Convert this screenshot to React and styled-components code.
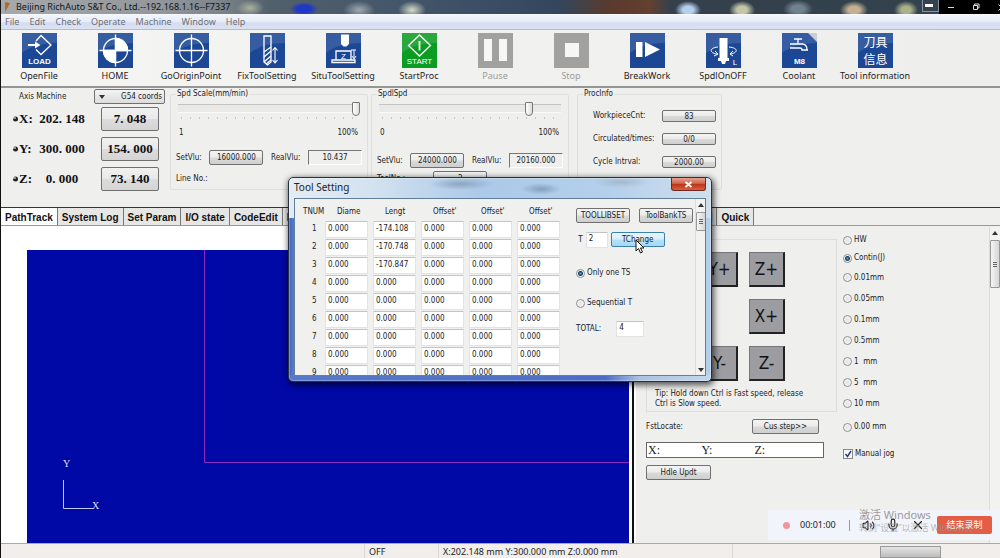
import React from 'react';
import styled, { createGlobalStyle, css } from 'styled-components';
import { Volume2, Mic, X } from 'lucide-react';

const GlobalStyle = createGlobalStyle`
  * {
    box-sizing: border-box;
  }
  body {
    margin: 0;
    background: #efefee;
    color: #222;
    font: 8px/12px 'DejaVu Sans Condensed', 'DejaVu Sans', sans-serif;
  }
  button, input, select {
    font: inherit;
    color: inherit;
    margin: 0;
  }
`;

const Page = styled.div`
  position: relative;
  display: flex;
  flex-direction: column;
  min-height: 100vh;
  overflow: hidden;
  border-left: 1px solid #111;
`;

/* ---------- title bar and menu ---------- */

const TitleBar = styled.header`
  display: flex;
  align-items: center;
  height: 14px;
  padding-left: 4px;
  gap: 6px;
  overflow: hidden;
  font: 9px/14px 'Noto Sans', sans-serif;
  color: #10151c;
  background:
    radial-gradient(ellipse 14px 8px at 249px 8px, #a9b39f, transparent),
    radial-gradient(ellipse 14px 7px at 303px 9px, #2038c8 50%, transparent),
    radial-gradient(ellipse 16px 9px at 358px 10px, #9fa9b0, transparent),
    radial-gradient(ellipse 14px 9px at 411px 10px, #d6dcc8, transparent),
    radial-gradient(ellipse 13px 9px at 687px 10px, #b5d0ee 40%, transparent),
    radial-gradient(ellipse 13px 9px at 741px 10px, #c3c7a8 40%, transparent),
    radial-gradient(ellipse 15px 9px at 797px 9px, #71828f 40%, transparent),
    radial-gradient(ellipse 14px 9px at 853px 10px, #c5b093 40%, transparent),
    radial-gradient(ellipse 12px 9px at 905px 10px, #a9b08a 40%, transparent),
    linear-gradient(90deg, #a7a9ab, #92979b 16%, #7d858b 22%, #51606b 27%, #44566a 40%, #34465c 56%, #5a3a2c 61%, #63402f 65%, #34404c 67%, #33424e 92%);
`;

const Title = styled.h1`
  flex: 1;
  margin: 0;
  font: inherit;
  white-space: nowrap;
`;

const MinButton = styled.button`
  align-self: flex-start;
  width: 17px;
  height: 12px;
  padding: 0 2px;
  border: 1px solid #87939b;
  border-top: 0;
  background: transparent;
  display: flex;
  align-items: center;
`;

const CaptionButtons = styled.div`
  display: flex;
  align-self: stretch;
  gap: 18px;
  width: 61px;
  margin-left: -6px;
  padding-left: 9px;
  overflow: hidden;
  background: #000;
`;

const CaptionButton = styled.button`
  flex: none;
  display: flex;
  align-items: center;
  padding: 0;
  border: 0;
  background: none;
  color: #ddd;
`;

const MenuBar = styled.nav`
  display: flex;
  gap: 10px;
  height: 16px;
  padding-left: 4px;
  border-top: 1px solid #f6f8fb;
  border-bottom: 1px solid #b9bcc2;
  background: linear-gradient(#f2f5fb, #e6ebf7 50%, #d5dcef 55%, #dbe2f2);
`;

const MenuLink = styled.a`
  font: 9px/14px 'Noto Sans', sans-serif;
  color: #6c7078;
  text-decoration: none;
`;

/* ---------- toolbar ---------- */

const ToolBar = styled.div`
  display: flex;
  height: 58px;
  padding-top: 3px;
  border-bottom: 2px solid #959595;
  background: linear-gradient(90deg, #f4f4f3, #eeeeec);
`;

const ToolItem = styled.button`
  display: flex;
  flex-direction: column;
  align-items: center;
  width: 76px;
  padding: 0;
  border: 0;
  background: none;
  font: 9px/15px 'Noto Sans', sans-serif;
  color: #1d1d1d;
  white-space: nowrap;

  &:disabled {
    color: #9b9b9b;
  }
`;

const ToolIcon = styled.svg`
  width: 35px;
  height: 35px;
  flex: none;
`;

/* ---------- common controls ---------- */

const PushButton = styled.button`
  width: ${({ $w }) => $w || 54}px;
  height: ${({ $h }) => $h || 15}px;
  padding: 0;
  border: 1px solid #707070;
  border-radius: 2px;
  background: linear-gradient(#f4f4f4, #ebebeb 48%, #dadada 52%, #cfcfcf);
  line-height: 12px;
  white-space: nowrap;

  ${({ $hot }) =>
    $hot &&
    css`
      border-color: #3c7fb1;
      background: linear-gradient(#e8f5fd, #d6effc 48%, #b6e2fa 52%, #a5d7f3);
    `}
`;

const Group = styled.fieldset`
  min-width: 0;
  width: ${({ $w }) => $w}px;
  height: 102px;
  margin: 0 0 0 ${({ $left }) => $left || 0}px;
  padding: ${({ $top }) => $top || 0}px 5px 0;
  border: 1px solid #dfdfdd;
  border-radius: 2px;
`;

const Legend = styled.legend`
  padding: 0 1px;
  line-height: 12px;
`;

const Range = styled.input`
  appearance: none;
  display: block;
  width: 182px;
  height: 15px;
  margin: 1px 0 1px 2px;
  background: linear-gradient(#c4c4c4, #c4c4c4) 0 3px / 100% 1px no-repeat,
    linear-gradient(#e9e9e8, #e9e9e8) 0 4px / 100% 7px no-repeat,
    linear-gradient(#fafafa, #fafafa) 0 11px / 100% 1px no-repeat;

  &::-webkit-slider-thumb {
    appearance: none;
    width: 8px;
    height: 14px;
    border: 1px solid #777;
    border-radius: 1px 1px 4px 4px;
    background: linear-gradient(90deg, #fff, #ddd);
  }
`;

const Ticks = styled.div`
  height: 2px;
  margin: 0 6px 0 5px;
  background: repeating-linear-gradient(90deg, #c6c6c6 0 1px, transparent 1px 9px);
`;

const Ends = styled.div`
  display: flex;
  justify-content: space-between;
  margin: 8px 4px 0 3px;
`;

const Values = styled.div`
  display: flex;
  align-items: center;
  justify-content: ${({ $gap }) => ($gap ? 'flex-start' : 'space-between')};
  gap: ${({ $gap }) => $gap || 0}px;
  margin-top: ${({ $top }) => $top}px;
`;

const Sunken = styled.output`
  width: 54px;
  height: 15px;
  border: 1px solid #fff;
  border-top-color: #777;
  border-left-color: #777;
  line-height: 13px;
  text-align: center;
`;

/* ---------- info strip ---------- */

const InfoStrip = styled.section`
  display: flex;
  height: 119px;
  gap: 3px;
`;

const AxisPanel = styled.div`
  width: 166px;
  padding: 1px 0 0 12px;
`;

const AxisHead = styled.div`
  display: flex;
  justify-content: space-between;
  align-items: center;
  padding: 0 2px 0 6px;
`;

const CoordSelect = styled.div`
  display: grid;
  width: 71px;

  > * {
    grid-area: 1 / 1;
  }
  svg {
    margin: 6px 0 0 5px;
    pointer-events: none;
  }
  select {
    appearance: none;
    height: 15px;
    padding: 0 2px;
    border: 1px solid #707070;
    border-radius: 2px;
    background: linear-gradient(#f4f4f4, #dcdcdc);
    text-align-last: right;
  }
`;

const AxisRow = styled.div`
  display: grid;
  grid-template-columns: 6px 18px 50px 72px;
  align-items: center;
  height: 30px;
  font: bold 13px/16px 'Liberation Serif', serif;
  color: #111;

  output {
    text-align: center;
    white-space: nowrap;
  }
`;

const AxisButton = styled(PushButton)`
  margin-left: 14px;
  font: bold 13px/16px 'Liberation Serif', serif;
  background: linear-gradient(#f1f1f1, #e9e9e9 48%, #dcdcdc 52%, #d4d4d4);
`;

const InfoRow = styled.div`
  display: flex;
  align-items: center;
  justify-content: space-between;
  height: 23px;
  padding-left: 10px;
`;

/* ---------- work area ---------- */

const Work = styled.main`
  display: grid;
  grid-template-columns: 633fr 366fr;
  flex: 1;
`;

const Pane = styled.section`
  display: flex;
  flex-direction: column;
  min-width: 0;
  border-top: 1px solid #333;
  border-right: ${({ $split }) => ($split ? '2px solid #111' : '0')};
`;

const Tabs = styled.div`
  display: flex;
  height: 18px;
  padding-left: ${({ $indent }) => $indent || 0}px;
  overflow: hidden;
  border-bottom: 1px solid #999;
`;

const Tab = styled.button`
  flex: none;
  padding: 2px ${({ $pad }) => $pad || 4}px 0;
  border: 0;
  border-right: 1px solid #777;
  background: ${({ $active }) => ($active ? '#fff' : '#e6e6e5')};
  font: bold 10px/15px 'Liberation Sans', sans-serif;
  color: #111;
`;

const PathPage = styled.div`
  flex: 1;
  display: flex;
  padding: 24px 3px 0 26px;
  background: #fff;
`;

const PathView = styled.svg`
  width: 100%;
  height: 293px;
  background: #0008a6;
`;

const JogPage = styled.div`
  flex: 1;
  display: flex;
  padding: 1px 0 0 10px;
  border-left: 2px solid #fff;
`;

const JogMain = styled.div`
  width: 191px;
`;

const JogBox = styled.div`
  height: 173px;
  margin-top: 12px;
  padding: 12px 6px 0 8px;
  border: 1px solid #dededc;
`;

const JogGrid = styled.div`
  display: grid;
  grid-template-columns: repeat(3, 36px);
  grid-auto-rows: 35px;
  gap: 12px 11px;
`;

const JogButton = styled.button`
  grid-column: ${({ $col }) => $col};
  padding: 0;
  border: 1px solid #77777b;
  border-right: 2px solid #222;
  border-bottom: 2px solid #222;
  background: #9c9ca1;
  font: 17px/20px 'DejaVu Sans Condensed', sans-serif;
  color: #111;
`;

const Tip = styled.p`
  margin: 8px 0 0;
  line-height: 10px;
  white-space: nowrap;
`;

const JogRow = styled.div`
  display: flex;
  align-items: center;
  justify-content: space-between;
  padding: 7px 18px 8px 0;
`;

const LocateInput = styled.input`
  display: block;
  width: 178px;
  height: 16px;
  margin-bottom: 7px;
  padding: 0 1px;
  border: 1px solid #666;
  background: #fff;
  font: 12px/14px 'Liberation Serif', serif;
`;

const StepList = styled.div`
  flex: 1;
  display: flex;
  flex-direction: column;
  padding: 4px 0 0 6px;
`;

const Choice = styled.label`
  display: flex;
  align-items: center;
  gap: 2px;
  height: ${({ $h }) => $h || 21}px;
  white-space: pre;
`;

const Radio = styled.input`
  appearance: none;
  flex: none;
  width: 9px;
  height: 9px;
  border: 1px solid #8c8f92;
  border-radius: 50%;
  background: radial-gradient(#e4e4e4, #fbfbfb);

  &:checked {
    background: radial-gradient(circle, #5fa8d4 0, #123a5e 2px, #1b3d5c 2px, #f4f4f4 3px);
  }
`;

const Check = styled.input`
  appearance: none;
  grid-area: 1 / 1;
  width: 10px;
  height: 10px;
  border: 1px solid #888;
  background: #f5f7fa;
`;

const CheckBox = styled.span`
  display: grid;

  svg {
    grid-area: 1 / 1;
    pointer-events: none;
  }
`;

const ScrollBar = styled.div`
  display: flex;
  flex-direction: column;
  align-items: center;
  width: 11px;
  border-left: 1px solid #dcdcda;
  background: #f2f2f1;
`;

const ScrollThumb = styled.div`
  display: flex;
  flex-direction: column;
  align-items: center;
  justify-content: center;
  gap: 1px;
  width: 10px;
  height: ${({ $h }) => $h}px;
  margin: 2px 0 auto;
  border: 1px solid #999;
  border-radius: 1px;
  background: linear-gradient(90deg, #f5f5f5, #d6d6d6);

  i {
    width: 4px;
    height: 1px;
    background: #666;
  }
`;

/* ---------- status bar ---------- */

const StatusBar = styled.footer`
  display: flex;
  height: 15px;
  border-top: 1px solid #a9a9a7;
  background: #f1eeeb;
  font: 9px/15px 'Noto Sans', sans-serif;
`;

const StatusCell = styled.span`
  width: ${({ $w }) => $w}px;
  padding-left: 4px;
  border-right: 1px solid #dbd8d5;
`;

const StatusButton = styled.span`
  width: 61px;
  height: 12px;
  margin: 2px 0 0 147px;
  border: 1px solid #999;
  background: linear-gradient(#e4e4e4, #bdbdbd);
`;

/* ---------- tool setting window ---------- */

const Dialog = styled.section`
  position: absolute;
  left: 287px;
  top: 177px;
  width: 424px;
  padding: 0 5px 5px;
  border: 1px solid #26323f;
  border-radius: 5px;
  background:
    radial-gradient(ellipse 32px 6px at 172px 6px, #8da5bf, transparent),
    radial-gradient(ellipse 20px 6px at 252px 11px, #84a0c0, transparent),
    radial-gradient(ellipse 28px 6px at 332px 4px, #a5b9cd, transparent),
    linear-gradient(90deg, #e4ecf3, #d3e2f0 20%, #abc9e8 45%, #b3cfeb 75%, #d0dfed) 0 0 / 100% 40px no-repeat,
    linear-gradient(90deg, #5878cc, #4d6cc8 75%, #abc3e2 83%, #c3d8ee) 0 100% / 100% 6px no-repeat,
    linear-gradient(90deg, #4362c4, #5c7ccf 5px, #b3cfeb 50%);
  box-shadow: 0 0 0 1px #ffffff44 inset, 1px 2px 6px 1px #000000aa;
`;

const DialogTitle = styled.div`
  display: flex;
  justify-content: space-between;
  height: 20px;

  h2 {
    margin: 0;
    font: 10px/19px 'Noto Sans', sans-serif;
    color: #222;
  }
`;

const CloseButton = styled.button`
  display: grid;
  place-items: center;
  width: 35px;
  height: 13px;
  padding: 0;
  border: 1px solid #6d2a22;
  border-top: 0;
  border-radius: 0 0 3px 3px;
  background: linear-gradient(#e3a292, #d2664d 45%, #bd3116 50%, #d46340);
`;

const DialogBody = styled.div`
  display: flex;
  height: 178px;
  overflow: hidden;
  border: 1px solid #5f7f9d;
  background: #f0f0ef;
`;

const ToolTable = styled.table`
  align-self: flex-start;
  width: 270px;
  table-layout: fixed;
  border-collapse: collapse;

  th {
    height: 21px;
    padding: 4px 0 0 12px;
    font-weight: normal;
    text-align: left;
    white-space: nowrap;
  }
  th:first-child {
    padding-left: 8px;
  }
  td {
    height: 18px;
    padding: 0 5px 0 0;
  }
  td:first-child {
    padding: 0 0 0 17px;
  }
`;

const Cell = styled.input`
  display: block;
  width: ${({ $w }) => ($w ? `${$w}px` : '100%')};
  height: ${({ $h }) => $h || 17}px;
  padding: 0 2px 2px;
  border: 1px solid #e2e3e4;
  border-top-color: #c2c4c8;
  background: #fff;
`;

const ToolSide = styled.div`
  flex: 1;
  padding: 9px 2px 0 11px;
`;

const SideRow = styled.div`
  display: flex;
  align-items: center;
  height: ${({ $h }) => $h}px;
  gap: ${({ $gap }) => $gap || 0}px;
`;

const Pointer = styled.svg`
  position: absolute;
  left: 346px;
  top: 61px;
`;

/* ---------- recorder overlay ---------- */

const Recorder = styled.aside`
  position: absolute;
  right: 0;
  bottom: 18px;
  display: flex;
  align-items: center;
  width: 232px;
  height: 30px;
  padding: 0 8px 0 15px;
  background: #f2f4fce8;
  color: #222;

  time {
    margin: 0 13px 0 10px;
    font: 9px/14px 'Noto Sans', sans-serif;
  }
  i {
    width: 1px;
    height: 11px;
    margin-right: 12px;
    background: #999;
  }
`;

const Dot = styled.span`
  width: 7px;
  height: 7px;
  border-radius: 50%;
  background: #f0969a;
`;

const RecButton = styled.button`
  display: flex;
  padding: 0;
  margin-right: 11px;
  border: 0;
  background: none;
`;

const StopButton = styled.button`
  flex: none;
  width: 55px;
  height: 18px;
  margin-left: auto;
  padding: 0;
  border: 0;
  border-radius: 2px;
  background: #e45d45;
  font: 9px/18px 'Noto Sans CJK SC', sans-serif;
  color: #fff;
`;

const Watermark = styled.div`
  position: absolute;
  right: 22px;
  bottom: 24px;
  width: 119px;
  font: 9px/13px 'Noto Sans', 'Noto Sans CJK SC', sans-serif;
  color: #9a9a9aaa;
  white-space: nowrap;
  pointer-events: none;

  strong {
    display: block;
    font-size: 11px;
    font-weight: normal;
    color: #9b9b9b;
  }
`;

const Tile = ({ fill = '#1b4795', children }) => (
  <ToolIcon viewBox="0 0 35 35" fill="none" stroke="#fff" strokeWidth="1.3">
    <rect width="35" height="35" fill={fill} stroke="none" />
    {fill !== '#a1a19f' && <path d="M0 20Q12 10 35 10V0H0Z" fill="#fff" opacity=".12" stroke="none" />}
    {children}
  </ToolIcon>
);

const iconText = {
  fill: '#fff',
  stroke: 'none',
  textAnchor: 'middle',
  fontFamily: 'Liberation Sans, Noto Sans CJK SC, sans-serif',
};

const tools = [
  {
    label: 'OpenFile',
    icon: (
      <Tile>
        <path d="M14 8L19 2.500 29 12 19 21.500 14 16.500" />
        <path d="M6 12H15" strokeWidth="2" />
        <path d="M13 8.500L18.500 12 13 15.500Z" fill="#fff" stroke="none" />
        <text x="17.500" y="30.500" fontSize="8" fontWeight="bold" {...iconText}>LOAD</text>
      </Tile>
    ),
  },
  {
    label: 'HOME',
    icon: (
      <Tile>
        <circle cx="17.500" cy="17.500" r="12" />
        <path d="M17.500 17.500V5.500A12 12 0 0 1 29.500 17.500ZM17.500 17.500V29.500A12 12 0 0 1 5.500 17.500Z" fill="#fff" />
        <path d="M17.500 1.500V33.500M1.500 17.500H33.500" />
      </Tile>
    ),
  },
  {
    label: 'GoOriginPoint',
    icon: (
      <Tile>
        <circle cx="17.500" cy="17.500" r="12" />
        <path d="M17.500 1.500V33.500M1.500 17.500H33.500" />
      </Tile>
    ),
  },
  {
    label: 'FixToolSetting',
    icon: (
      <Tile>
        <path d="M14 3H21V29L17.500 32 14 29Z" />
        <path d="M14 19L21 14M14 24L21 18M14 29L21 23M16 31L21 27" />
        <path d="M25 15V29M22.500 17.500L25 14.500 27.500 17.500M22.500 27L25 30 27.500 27" strokeWidth="1.100" />
      </Tile>
    ),
  },
  {
    label: 'SituToolSetting',
    icon: (
      <Tile>
        <path d="M15 1.500H23V11L20.500 13.500H17.500L15 11Z" fill="#fff" stroke="none" />
        <path d="M10 27V18H25V27M6 27V29.500H29V27Z" />
        <path d="M28 17V25M26 23L28 26 30 23M25 17H30" strokeWidth="1" />
        <text x="17.500" y="25.500" fontSize="8" {...iconText}>Z</text>
      </Tile>
    ),
  },
  {
    label: 'StartProc',
    icon: (
      <Tile fill="#0d9c23">
        <path d="M17.500 2L28.500 12.500 17.500 23 6.500 12.500Z" />
        <path d="M17.500 8V17.500" strokeWidth="1.800" />
        <text x="17.500" y="31" fontSize="8" {...iconText}>START</text>
      </Tile>
    ),
  },
  {
    label: 'Pause',
    disabled: true,
    icon: (
      <Tile fill="#a1a19f">
        <path d="M6 6H14V28H6ZM21 6H29V28H21Z" fill="#f6f6f5" stroke="none" />
      </Tile>
    ),
  },
  {
    label: 'Stop',
    disabled: true,
    icon: (
      <Tile fill="#a1a19f">
        <rect x="11" y="10" width="14" height="14" fill="#f6f6f5" stroke="none" />
      </Tile>
    ),
  },
  {
    label: 'BreakWork',
    icon: (
      <Tile>
        <path d="M6 9H12.500V24H6ZM15 9L30 16.500 15 24Z" fill="#fff" stroke="none" />
      </Tile>
    ),
  },
  {
    label: 'SpdlOnOFF',
    icon: (
      <Tile>
        <path d="M13.500 5H21.500V25H23V28H20L19 31H16L15 28H12V25H13.500Z" fill="#fff" stroke="none" />
        <path d="M12 14C2 15 4 21 12 21M23 14C33 15 32 20 24 21M27 18L24 21 27 23M8 23L12 21 9 18" strokeWidth="1" />
        <text x="29" y="31.500" fontSize="8" {...iconText}>L</text>
      </Tile>
    ),
  },
  {
    label: 'Coolant',
    icon: (
      <Tile>
        <path d="M26 0H35V9Z" fill="#c9cdd4" stroke="none" />
        <path d="M8 11H20Q25 11 25 17M8 15H18Q20 15 20 17H26M16 11V6M12 6H20" />
        <text x="17.500" y="31" fontSize="8" fontWeight="bold" {...iconText}>M8</text>
      </Tile>
    ),
  },
  {
    label: 'Tool information',
    icon: (
      <Tile>
        <text x="17.500" y="14" fontSize="12" {...iconText}>刀具</text>
        <text x="17.500" y="31" fontSize="12" {...iconText}>信息</text>
      </Tile>
    ),
  },
];

const axes = [
  { name: 'X', machine: '202. 148', work: '7. 048' },
  { name: 'Y', machine: '300. 000', work: '154. 000' },
  { name: 'Z', machine: '0. 000', work: '73. 140' },
];

const procInfo = [
  ['WorkpieceCnt:', '83'],
  ['Circulated/times:', '0/0'],
  ['Cycle Intrval:', '2000.00'],
];

const lengths = ['-174.108', '-170.748', '-170.847'];
const toolRows = Array.from({ length: 9 }, (_, i) => ['0.000', lengths[i] || '0.000', '0.000', '0.000', '0.000']);
const toolHeads = ['TNUM', 'Diame', 'Lengt', "Offset'", "Offset'", "Offset'"];

const steps = [
  { label: 'HW', height: 18 },
  { label: 'Contin(J)', height: 18 },
  { label: '0.01mm' },
  { label: '0.05mm' },
  { label: '0.1mm' },
  { label: '0.5mm' },
  { label: '1  mm' },
  { label: '5  mm' },
  { label: '10 mm' },
  { label: '0.00 mm', height: 26 },
];

const Arrow = ({ up }) => (
  <svg width="6" height="4" viewBox="0 0 6 4">
    <path d={up ? 'M0 4L3 0 6 4Z' : 'M0 0H6L3 4Z'} fill="#333" />
  </svg>
);

const Thumb = ({ h }) => (
  <ScrollThumb $h={h}>
    <i />
    <i />
    <i />
  </ScrollThumb>
);

const SpeedGroup = ({ title, from, value, setValue, realValue, top, children }) => (
  <Group $w={198}>
    <Legend>{title}</Legend>
    <Range type="range" defaultValue={value} aria-label={title} />
    <Ticks />
    <Ends>
      <span>{from}</span>
      <span>100%</span>
    </Ends>
    <Values $top={top}>
      <span>SetVlu:</span>
      <PushButton>{setValue}</PushButton>
      <span>RealVlu:</span>
      <Sunken>{realValue}</Sunken>
    </Values>
    {children}
  </Group>
);

const ToolSetting = () => (
  <Dialog role="dialog" aria-labelledby="tool-setting">
    <DialogTitle>
      <h2 id="tool-setting">Tool Setting</h2>
      <CloseButton aria-label="Close">
        <svg width="9" height="7" viewBox="0 0 9 7">
          <path d="M1.500 1L7.500 6M7.500 1L1.500 6" stroke="#fff" strokeWidth="2" />
        </svg>
      </CloseButton>
    </DialogTitle>
    <DialogBody>
      <ToolTable>
        <colgroup>
          <col width="30" />
          <col width="48" />
          <col width="48" />
          <col width="48" />
          <col width="48" />
          <col width="48" />
        </colgroup>
        <thead>
          <tr>
            {toolHeads.map((head, i) => (
              <th key={i}>{head}</th>
            ))}
          </tr>
        </thead>
        <tbody>
          {toolRows.map((row, i) => (
            <tr key={i}>
              <td>{i + 1}</td>
              {row.map((value, j) => (
                <td key={j}>
                  <Cell defaultValue={value} aria-label={`${toolHeads[j + 1]} ${i + 1}`} />
                </td>
              ))}
            </tr>
          ))}
        </tbody>
      </ToolTable>
      <ToolSide>
        <SideRow $h={15} $gap={9}>
          <PushButton>TOOLLIBSET</PushButton>
          <PushButton>ToolBankTS</PushButton>
        </SideRow>
        <SideRow $h={33} $gap={3}>
          <label htmlFor="tool-no">&nbsp;T</label>
          <Cell id="tool-no" $w={22} $h={16} defaultValue="2" />
          <PushButton $hot>TChange</PushButton>
        </SideRow>
        <Choice $h={34}>
          <Radio type="radio" name="ts" defaultChecked />
          Only one TS
        </Choice>
        <Choice $h={26}>
          <Radio type="radio" name="ts" />
          Sequential T
        </Choice>
        <SideRow $h={25} $gap={15}>
          <label htmlFor="total">TOTAL:</label>
          <Cell id="total" $w={28} $h={16} defaultValue="4" />
        </SideRow>
      </ToolSide>
      <ScrollBar>
        <SideRow $h={11}>
          <Arrow up />
        </SideRow>
        <Thumb h={19} />
        <SideRow $h={11}>
          <Arrow />
        </SideRow>
      </ScrollBar>
    </DialogBody>
    <Pointer width="10" height="15" viewBox="0 0 10 15">
      <path d="M1 1V12L3.500 9.500 5.500 14 7.500 13 5.500 9H9Z" fill="#fff" stroke="#111" />
    </Pointer>
  </Dialog>
);

const App = () => (
  <>
    <GlobalStyle />
    <Page>
      <TitleBar>
        <svg width="5" height="12" viewBox="0 0 5 12">
          <path d="M0 1L5 2 3 6 0 11Z" fill="#b06a31" />
        </svg>
        <Title>Beijing RichAuto S&amp;T Co., Ltd.--192.168.1.16--F7337</Title>
        <MinButton aria-label="Minimize">
          <svg width="8" height="3">
            <rect width="8" height="3" fill="#fff" />
          </svg>
        </MinButton>
        <CaptionButtons>
          <CaptionButton aria-label="Minimize screen">
            <svg width="6" height="7" viewBox="0 0 6 7" stroke="currentColor">
              <path d="M0 3.500H6" />
            </svg>
          </CaptionButton>
          <CaptionButton aria-label="Restore screen">
            <svg width="8" height="8" viewBox="0 0 8 8" fill="none" stroke="currentColor">
              <path d="M1.500 2.500H5.500V6.500H1.500ZM2.500 2.500V1H7V5H5.500" />
            </svg>
          </CaptionButton>
          <CaptionButton aria-label="Close screen">
            <svg width="7" height="7" viewBox="0 0 7 7" stroke="currentColor">
              <path d="M0.500 0.500L6.500 6.500M6.500 0.500L0.500 6.500" />
            </svg>
          </CaptionButton>
        </CaptionButtons>
      </TitleBar>

      <MenuBar>
        {['File', 'Edit', 'Check', 'Operate', 'Machine', 'Window', 'Help'].map((item) => (
          <MenuLink key={item} href="#">
            {item}
          </MenuLink>
        ))}
      </MenuBar>

      <ToolBar>
        {tools.map(({ label, icon, disabled }) => (
          <ToolItem key={label} disabled={disabled}>
            {icon}
            {label}
          </ToolItem>
        ))}
      </ToolBar>

      <InfoStrip>
        <AxisPanel>
          <AxisHead>
            <span>Axis Machine</span>
            <CoordSelect>
              <select aria-label="Coordinate system">
                <option>G54 coords</option>
              </select>
              <Arrow />
            </CoordSelect>
          </AxisHead>
          {axes.map((axis) => (
            <AxisRow key={axis.name}>
              <svg width="5" height="6" viewBox="0 0 5 6">
                <circle cx="2.500" cy="3" r="2.500" fill="#222" />
                <path d="M0 2H3" stroke="#fff" />
              </svg>
              <span>{axis.name}:</span>
              <output>{axis.machine}</output>
              <AxisButton $w={58} $h={24}>
                {axis.work}
              </AxisButton>
            </AxisRow>
          ))}
        </AxisPanel>
        <SpeedGroup title="Spd Scale(mm/min)" from="1" value={100} setValue="16000.000" realValue="10.437" top={11}>
          <Values $top={8}>Line No.:</Values>
        </SpeedGroup>
        <SpeedGroup title="SpdlSpd" from="0" value={84} setValue="24000.000" realValue="20160.000" top={14}>
          <Values $top={3} $gap={28}>
            ToolNo.:
            <PushButton>2</PushButton>
          </Values>
        </SpeedGroup>
        <Group $w={145} $left={5} $top={4}>
          <Legend>ProcInfo</Legend>
          {procInfo.map(([label, value]) => (
            <InfoRow key={label}>
              <span>{label}</span>
              <PushButton $h={12}>{value}</PushButton>
            </InfoRow>
          ))}
        </Group>
      </InfoStrip>

      <Work>
        <Pane $split>
          <Tabs>
            <Tab $active>PathTrack</Tab>
            <Tab>System Log</Tab>
            <Tab>Set Param</Tab>
            <Tab>I/O state</Tab>
            <Tab>CodeEdit</Tab>
            <Tab>F</Tab>
          </Tabs>
          <PathPage>
            <PathView>
              <path d="M177.500 0V212.500H700" fill="none" stroke="#8a2bc4" />
              <path d="M36.500 230V258.500H66" fill="none" stroke="#c3c8f0" />
              <g fill="#dfe3fa" fontFamily="Liberation Serif, serif" fontSize="10">
                <text x="36" y="217">Y</text>
                <text x="65" y="259">X</text>
              </g>
            </PathView>
          </PathPage>
        </Pane>

        <Pane>
          <Tabs $indent={40}>
            <Tab>Manual</Tab>
            <Tab>Quick</Tab>
          </Tabs>
          <JogPage>
            <JogMain>
              <JogBox>
                <JogGrid>
                  <JogButton $col={2}>Y+</JogButton>
                  <JogButton $col={3}>Z+</JogButton>
                  <JogButton $col={3}>X+</JogButton>
                  <JogButton $col={2}>Y-</JogButton>
                  <JogButton $col={3}>Z-</JogButton>
                </JogGrid>
                <Tip>
                  Tip: Hold down Ctrl is Fast speed, release
                  <br />
                  Ctrl is Slow speed.
                </Tip>
              </JogBox>
              <JogRow>
                <label htmlFor="locate">FstLocate:</label>
                <PushButton $w={67}>Cus step&gt;&gt;</PushButton>
              </JogRow>
              <LocateInput id="locate" defaultValue="X:              Y:              Z:" />
              <PushButton $w={65}>Hdle Updt</PushButton>
            </JogMain>
            <StepList>
              {steps.map(({ label, height }) => (
                <Choice key={label} $h={height}>
                  <Radio type="radio" name="step" defaultChecked={label === 'Contin(J)'} />
                  {label}
                </Choice>
              ))}
              <Choice $h={28}>
                <CheckBox>
                  <Check type="checkbox" defaultChecked />
                  <svg width="10" height="10" viewBox="0 0 10 10">
                    <path d="M2.500 5L4.500 7.500 8 2" fill="none" stroke="#2a3c74" strokeWidth="1.500" />
                  </svg>
                </CheckBox>
                Manual jog
              </Choice>
            </StepList>
            <ScrollBar>
              <SideRow $h={11}>
                <Arrow up />
              </SideRow>
              <Thumb h={48} />
            </ScrollBar>
          </JogPage>
        </Pane>
      </Work>

      <StatusBar>
        <StatusCell $w={364} />
        <StatusCell $w={74}>OFF</StatusCell>
        <StatusCell $w={294}>X:202.148 mm Y:300.000 mm Z:0.000 mm</StatusCell>
        <StatusButton />
      </StatusBar>

      <ToolSetting />

      <Recorder>
        <Dot />
        <time>00:01:00</time>
        <i />
        <RecButton aria-label="Sound">
          <Volume2 size={13} strokeWidth={2} />
        </RecButton>
        <RecButton aria-label="Microphone">
          <Mic size={14} strokeWidth={2} />
        </RecButton>
        <RecButton aria-label="Close recorder">
          <X size={14} strokeWidth={2} />
        </RecButton>
        <StopButton>结束录制</StopButton>
      </Recorder>
      <Watermark>
        <strong>激活 Windows</strong>
        转到“设置”以激活 Windows。
      </Watermark>
    </Page>
  </>
);

export default App;
